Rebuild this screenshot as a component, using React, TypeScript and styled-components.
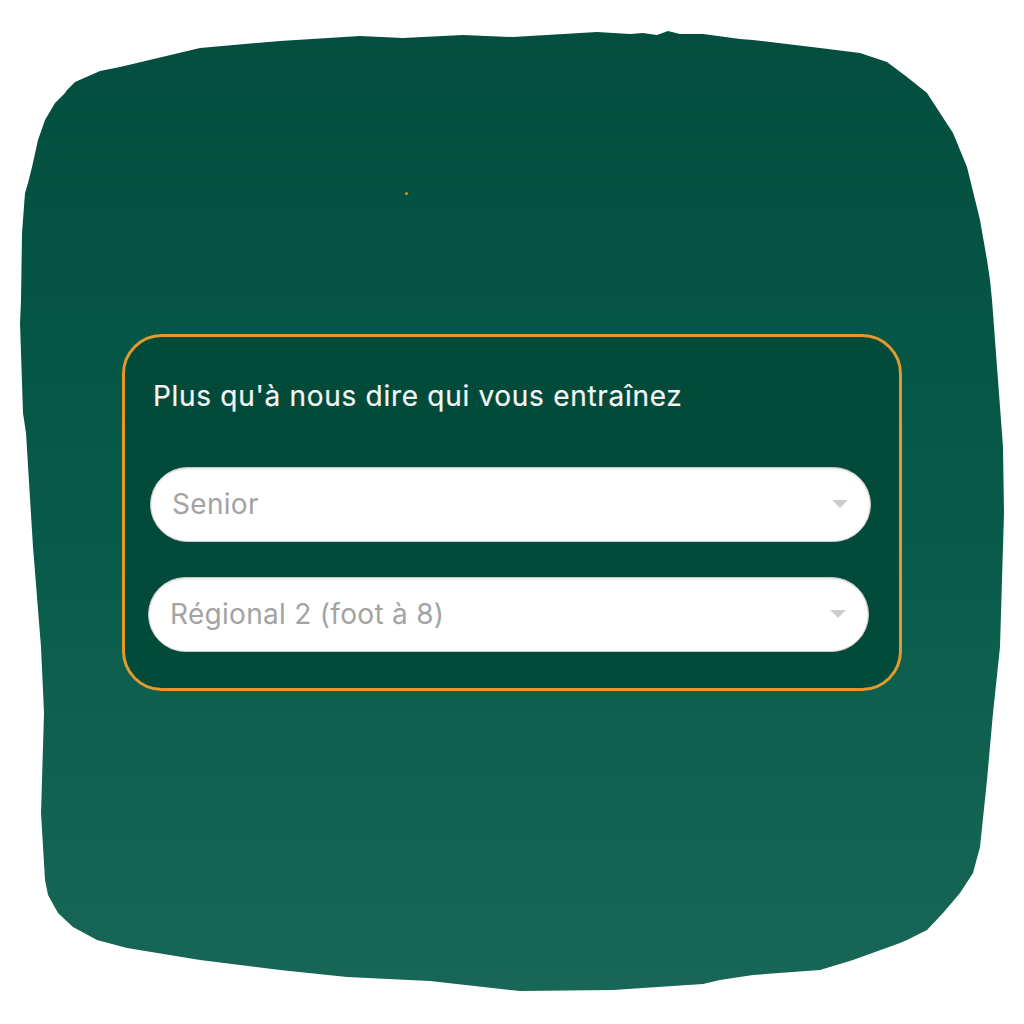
import React from 'react'
import styled, { createGlobalStyle } from 'styled-components'

const GlobalStyle = createGlobalStyle`
  html, body {
    margin: 0;
    padding: 0;
    background: #ffffff;
  }
  * {
    box-sizing: border-box;
  }
`

const blobOutline = [
  [21, 300], [22, 233], [25, 193], [28, 183], [32, 167], [38, 140], [45, 120],
  [55, 103], [65, 93], [67, 90], [75, 82], [100, 71], [120, 67], [200, 48],
  [280, 41], [360, 36], [403, 38], [463, 35], [513, 37], [597, 32], [630, 34],
  [643, 33], [657, 35], [668, 31], [680, 34], [703, 34], [740, 39], [753, 40],
  [820, 48], [860, 53], [887, 62], [907, 77], [927, 93], [953, 133], [967, 167],
  [980, 220], [987, 260], [990, 280], [992, 300], [998, 380], [1003, 447],
  [1004, 513], [1002, 580], [1000, 647], [993, 713], [987, 780], [980, 847],
  [973, 873], [960, 893], [943, 913], [927, 930], [907, 940], [900, 943],
  [853, 960], [820, 970], [753, 975], [720, 980], [703, 984], [613, 990],
  [520, 991], [430, 981], [347, 977], [280, 970], [200, 960], [127, 948],
  [97, 940], [73, 927], [58, 913], [48, 895], [45, 880], [41, 813], [42, 780],
  [44, 713], [41, 647], [33, 547], [26, 433], [23, 413], [20, 323],
]
  .map(([x, y]) => `${x}px ${y}px`)
  .join(', ')

const Blob = styled.main`
  position: relative;
  width: 1024px;
  height: 1024px;
  display: flex;
  align-items: center;
  justify-content: center;
  background: linear-gradient(180deg, #034d3d 0%, #075a49 50%, #196857 100%);
  clip-path: polygon(${blobOutline});
`

const Speck = styled.span`
  position: absolute;
  left: 405px;
  top: 192px;
  width: 3px;
  height: 3px;
  border-radius: 50%;
  background: #d8902a;
`

const Card = styled.section`
  width: 780px;
  height: 357px;
  display: flex;
  flex-direction: column;
  padding: 42px 28px 37px 25px;
  border: 3px solid #e29a2f;
  border-radius: 40px;
  background: #024a3a;
`

const Title = styled.h2`
  margin: 0 0 54px 3px;
  font-family: Inter, Roboto, 'Noto Sans', sans-serif;
  font-weight: 400;
  font-size: 28px;
  line-height: 34px;
  letter-spacing: 0.7px;
  color: #f4f6f5;
  -webkit-text-stroke: 0.2px #f4f6f5;
`

const Fields = styled.div`
  display: flex;
  flex-direction: column;
  gap: 35px;
`

const Select = styled.div<{ $shift?: number }>`
  height: 75px;
  display: flex;
  align-items: center;
  justify-content: space-between;
  margin-left: ${(p) => p.$shift ?? 0}px;
  margin-right: ${(p) => -(p.$shift ?? 0)}px;
  padding: 0 22px 0 21px;
  border: 1px solid #c9c9c9;
  border-radius: 38px;
  background: #ffffff;
  box-shadow: inset 0 1px 2px rgba(0, 0, 0, 0.12);
`

const Value = styled.span`
  font-family: Inter, Roboto, 'Noto Sans', sans-serif;
  font-size: 28px;
  letter-spacing: 0.3px;
  color: #a3a3a3;
`

const Caret = styled.span`
  width: 0;
  height: 0;
  border-left: 8px solid transparent;
  border-right: 8px solid transparent;
  border-top: 8px solid #cdcdcd;
`

const fields = [
  { label: 'Senior', shift: 0 },
  { label: 'Régional 2 (foot à 8)', shift: -2 },
]

export default function App() {
  return (
    <>
      <GlobalStyle />
      <Blob>
        <Speck />
        <Card>
          <Title>Plus qu'à nous dire qui vous entraînez</Title>
          <Fields>
            {fields.map((f) => (
              <Select key={f.label} $shift={f.shift}>
                <Value>{f.label}</Value>
                <Caret />
              </Select>
            ))}
          </Fields>
        </Card>
      </Blob>
    </>
  )
}
